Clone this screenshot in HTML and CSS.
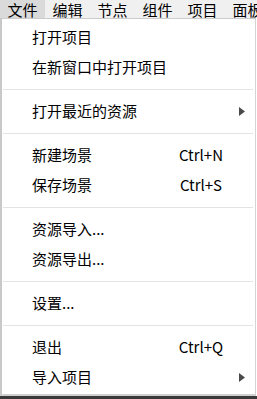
FILE: index.html
```html
<!DOCTYPE html>
<html lang="zh-cn">
<head>
    <meta charset="utf-8">
    <title>文件菜单</title>
    <link rel="stylesheet" href="styles.css">
</head>
<body>
    <nav class="menubar">
        <span class="menubar-item active">文件</span>
        <span class="menubar-item">编辑</span>
        <span class="menubar-item">节点</span>
        <span class="menubar-item">组件</span>
        <span class="menubar-item">项目</span>
        <span class="menubar-item">面板</span>
    </nav>

    <ul class="dropdown">
        <li class="item"><span>打开项目</span></li>
        <li class="item"><span>在新窗口中打开项目</span></li>
        <li class="sep"></li>
        <li class="item"><span>打开最近的资源</span><span></span><svg class="arrow" width="6" height="9" viewBox="0 0 6 9"><polygon points="0,0 6,4.5 0,9" fill="#4a4a4a"/></svg></li>
        <li class="sep"></li>
        <li class="item"><span>新建场景</span><span class="key">Ctrl+N</span></li>
        <li class="item"><span>保存场景</span><span class="key">Ctrl+S</span></li>
        <li class="sep"></li>
        <li class="item"><span>资源导入...</span></li>
        <li class="item"><span>资源导出...</span></li>
        <li class="sep"></li>
        <li class="item"><span>设置...</span></li>
        <li class="sep"></li>
        <li class="item"><span>退出</span><span class="key">Ctrl+Q</span></li>
        <li class="item"><span>导入项目</span><span></span><svg class="arrow" width="6" height="9" viewBox="0 0 6 9"><polygon points="0,0 6,4.5 0,9" fill="#4a4a4a"/></svg></li>
    </ul>

    <div class="edge"></div>
</body>
</html>
```

FILE: styles.css
```css
html, body {
    margin: 0;
    padding: 0;
    background: #fff;
}
body {
    font: 15px "Noto Sans CJK SC", "Microsoft YaHei", sans-serif;
    color: #000;
    width: 257px;
    height: 399px;
    overflow: hidden;
}
.menubar {
    display: flex;
    align-items: center;
    height: 18px;
    background: #f0f0f0;
    white-space: nowrap;
    overflow: hidden;
}
.menubar-item {
    display: flex;
    align-items: center;
    height: 18px;
    padding: 0 7.5px;
    line-height: 15px;
}
.menubar-item.active {
    background: #dadada;
}
.dropdown {
    list-style: none;
    margin: 0;
    padding: 3px 0 3px;
    width: 253px;
    height: 369px;
    border-top: solid 1px #cccccc;
    border-left: solid 2px #c8c8c8;
    border-right: solid 1px #d4d4d4;
    border-bottom: solid 2px #d0d0d0;
}
.item {
    display: grid;
    grid-template-columns: 139px 60px 1fr;
    align-items: center;
    height: 30px;
    padding-left: 30px;
    line-height: 30px;
    white-space: nowrap;
}
.key {
    text-align: center;
}
.arrow {
    margin-left: 8px;
}
.sep {
    height: 1px;
    margin: 7px 2px 6px 1px;
    background: #e3e3e3;
}
.edge {
    height: 4px;
    background: #3a3a3a;
}
```
